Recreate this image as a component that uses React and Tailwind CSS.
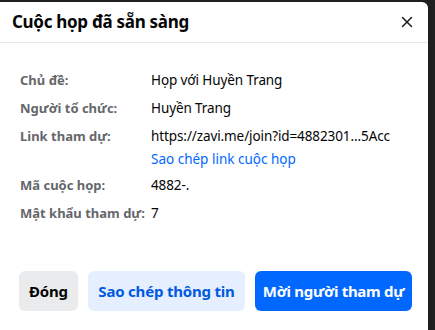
import { X } from "lucide-react";

const rows = [
  { label: "Chủ đề:", value: "Họp với Huyền Trang" },
  { label: "Người tổ chức:", value: "Huyền Trang" },
  { label: "Link tham dự:", value: "https://zavi.me/join?id=4882301...5Acc", link: "Sao chép link cuộc họp" },
  { label: "Mã cuộc họp:", value: "4882-." },
  { label: "Mật khẩu tham dự:", value: "7" },
];

export default function App() {
  return (
    <div className="h-[330px] w-[435px] bg-[#1f1f1f] pt-[2px] pr-[7px] overflow-hidden" style={{ fontFamily: '"Noto Sans", sans-serif' }}>
      <div className="h-full bg-white rounded-tr-[6px] flex flex-col">
        <div className="h-[41px] flex items-center justify-between pl-[12px] pr-[12px] border-b border-[#e4e6eb]">
          <h1 className="text-[17px] font-bold text-[#050505] tracking-[-0.3px]">Cuộc họp đã sẵn sàng</h1>
          <X className="w-[18px] h-[18px] text-[#1c1e21]" strokeWidth={2} />
        </div>

        <div className="pl-[20px] pt-[27px] flex flex-col gap-[8px]">
          {rows.map((r) => (
            <div key={r.label} className="flex">
              <div className="w-[131px] text-[13px] font-bold text-[#65676b] leading-[20px]">{r.label}</div>
              <div className="flex flex-col gap-[5px]">
                <div className="text-[13.5px] text-[#050505] leading-[20px] tracking-[-0.1px]">{r.value}</div>
                {r.link && <div className="text-[13.5px] text-[#0068ff] leading-[16px]">{r.link}</div>}
              </div>
            </div>
          ))}
        </div>

        <div className="mt-auto mb-[19px] flex gap-[10px] pl-[19px]">
          <button className="h-[40px] w-[59px] rounded-[6px] bg-[#eaebed] text-[#050505] text-[15px] font-bold tracking-[-0.2px]">Đóng</button>
          <button className="h-[40px] w-[157px] rounded-[6px] bg-[#e5efff] text-[#005ae0] text-[15px] font-bold tracking-[-0.2px]">Sao chép thông tin</button>
          <button className="h-[40px] w-[157px] rounded-[6px] bg-[#0068ff] text-white text-[15px] font-bold tracking-[-0.3px]">Mời người tham dự</button>
        </div>
      </div>
    </div>
  );
}
